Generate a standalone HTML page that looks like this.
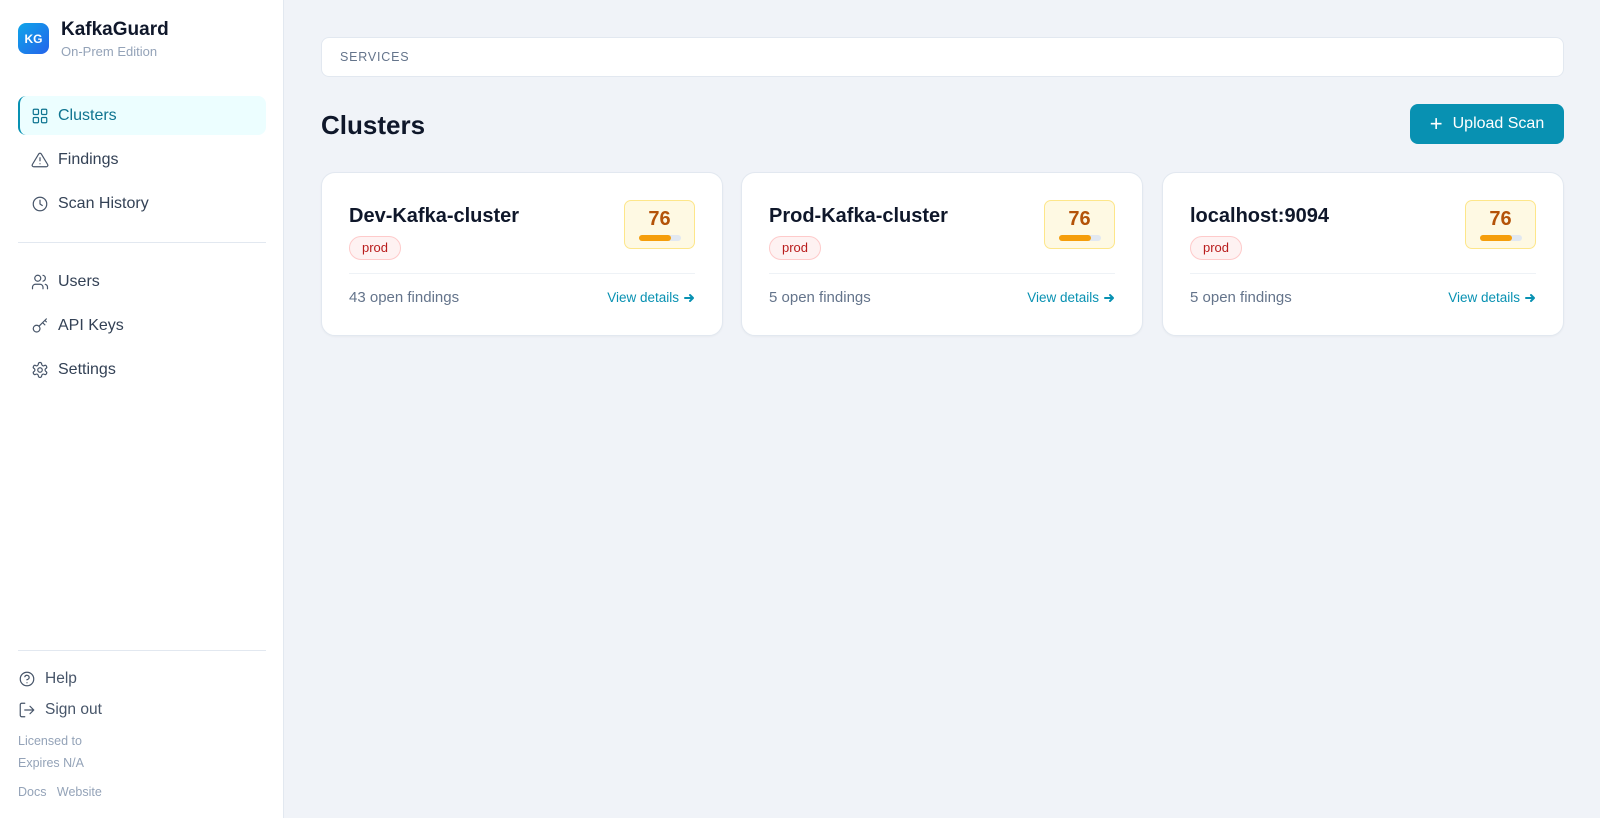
<!DOCTYPE html>
<html><head><meta charset="utf-8"><style>
*{box-sizing:border-box;margin:0;padding:0}
body{width:1600px;height:818px;font-family:"Liberation Sans",sans-serif;background:#f0f3f8;position:relative;overflow:hidden;color:#0f172a}
.sb{position:absolute;left:0;top:0;width:284px;height:818px;background:#fff;border-right:1px solid #e2e8f0}
.abs{position:absolute}
.logo{left:18px;top:23px;width:31px;height:31px;border-radius:8px;background:linear-gradient(135deg,#0ea5e9,#2563eb);color:#fff;font-weight:bold;font-size:12px;display:flex;align-items:center;justify-content:center}
.nav{position:absolute;left:18px;width:248px;height:39px;display:flex;align-items:center;padding-left:13px;font-size:16px;color:#334155}
.nav svg{width:18px;height:18px;margin-right:9px;fill:none;stroke:#475569;stroke-width:1.6;stroke-linecap:round;stroke-linejoin:round}
.nav.act{background:#ecfeff;color:#0e7490;border-left:2px solid #0891b2;border-radius:8px;padding-left:11px}
.nav.act svg{stroke:#0e7490}
.hr{position:absolute;left:18px;width:248px;height:1px;background:#e2e8f0}
.bt{position:absolute;left:18px;display:flex;align-items:center;font-size:15.5px;color:#475569}
.bt svg{width:18px;height:18px;margin-right:9px;fill:none;stroke:#475569;stroke-width:1.6;stroke-linecap:round;stroke-linejoin:round}
.sm{position:absolute;left:18px;font-size:12.5px;color:#94a3b8}
.card{position:absolute;top:172px;width:402px;height:164px;background:#fff;border:1px solid #e2e8f0;border-radius:14px;box-shadow:0 1px 2px rgba(0,0,0,.04)}
.ct{position:absolute;left:27px;top:32px;font-size:20px;font-weight:600;color:#0f172a}
.tag{position:absolute;left:27px;top:63px;height:24px;padding:0 12px;border-radius:12px;background:#fef2f2;border:1px solid #fecaca;color:#b91c1c;font-size:13px;line-height:22px}
.score{position:absolute;right:27px;top:27px;width:71px;height:49px;border-radius:7px;background:#fef9e3;border:1px solid #fde68a}
.score b{position:absolute;left:0;right:0;top:7px;text-align:center;font-size:20px;color:#b45309}
.bar{position:absolute;left:14px;top:34px;width:42px;height:6px;border-radius:3px;background:#e2e8f0}
.bar i{display:block;width:32px;height:6px;border-radius:3px;background:#f59e0b}
.dv{position:absolute;left:27px;right:27px;top:100px;height:1px;background:#eef2f6}
.of{position:absolute;left:27px;top:116px;font-size:15px;color:#64748b}
.vd{position:absolute;right:27px;top:117px;font-size:13.5px;color:#0891b2;display:flex;align-items:center}
.vd svg{width:12px;height:12px;margin-left:4px;fill:none;stroke:#0891b2;stroke-width:2;stroke-linecap:round;stroke-linejoin:round}
</style></head><body>
<div class="sb">
<div class="abs logo">KG</div>
<div class="abs" style="left:61px;top:19px;font-size:19px;font-weight:bold;color:#0f172a">KafkaGuard</div>
<div class="abs" style="left:61px;top:44px;font-size:13px;color:#94a3b8">On-Prem Edition</div>
<div class="nav act" style="top:96px"><svg viewBox="0 0 24 24"><rect x="3" y="3" width="7" height="7" rx="1.5"/><rect x="14" y="3" width="7" height="7" rx="1.5"/><rect x="14" y="14" width="7" height="7" rx="1.5"/><rect x="3" y="14" width="7" height="7" rx="1.5"/></svg>Clusters</div>
<div class="nav" style="top:140px"><svg viewBox="0 0 24 24"><path d="M10.3 3.9 1.8 18a2 2 0 0 0 1.7 3h17a2 2 0 0 0 1.7-3L13.7 3.9a2 2 0 0 0-3.4 0z"/><path d="M12 9v4M12 17h.01"/></svg>Findings</div>
<div class="nav" style="top:184px"><svg viewBox="0 0 24 24"><circle cx="12" cy="12" r="9"/><path d="M12 7v5l3 2"/></svg>Scan History</div>
<div class="hr" style="top:242px"></div>
<div class="nav" style="top:262px"><svg viewBox="0 0 24 24"><circle cx="9" cy="7" r="4"/><path d="M2 21v-2a4 4 0 0 1 4-4h6a4 4 0 0 1 4 4v2M16 3.1a4 4 0 0 1 0 7.8M22 21v-2a4 4 0 0 0-3-3.9"/></svg>Users</div>
<div class="nav" style="top:306px"><svg viewBox="0 0 24 24"><circle cx="7.5" cy="15.5" r="4.5"/><path d="m10.7 12.3 9.8-9.8M15.5 7.5l3 3M18.5 4.5l2 2"/></svg>API Keys</div>
<div class="nav" style="top:350px"><svg viewBox="0 0 24 24"><path d="M12.2 2h-.4a2 2 0 0 0-2 2v.2a2 2 0 0 1-1 1.7l-.4.3a2 2 0 0 1-2 0l-.2-.1a2 2 0 0 0-2.7.7l-.2.4a2 2 0 0 0 .7 2.7l.2.1a2 2 0 0 1 1 1.7v.5a2 2 0 0 1-1 1.7l-.2.1a2 2 0 0 0-.7 2.7l.2.4a2 2 0 0 0 2.7.7l.2-.1a2 2 0 0 1 2 0l.4.3a2 2 0 0 1 1 1.7v.2a2 2 0 0 0 2 2h.4a2 2 0 0 0 2-2v-.2a2 2 0 0 1 1-1.7l.4-.3a2 2 0 0 1 2 0l.2.1a2 2 0 0 0 2.7-.7l.2-.4a2 2 0 0 0-.7-2.7l-.2-.1a2 2 0 0 1-1-1.7v-.5a2 2 0 0 1 1-1.7l.2-.1a2 2 0 0 0 .7-2.7l-.2-.4a2 2 0 0 0-2.7-.7l-.2.1a2 2 0 0 1-2 0l-.4-.3a2 2 0 0 1-1-1.7V4a2 2 0 0 0-2-2z"/><circle cx="12" cy="12" r="3"/></svg>Settings</div>
<div class="hr" style="top:650px"></div>
<div class="bt" style="top:670px"><svg viewBox="0 0 24 24"><circle cx="12" cy="12" r="9"/><path d="M9.1 9a3 3 0 0 1 5.8 1c0 2-3 3-3 3M12 17h.01"/></svg>Help</div>
<div class="bt" style="top:701px"><svg viewBox="0 0 24 24"><path d="M9 21H5a2 2 0 0 1-2-2V5a2 2 0 0 1 2-2h4M16 17l5-5-5-5M21 12H9"/></svg>Sign out</div>
<div class="sm" style="top:734px">Licensed to</div>
<div class="sm" style="top:756px">Expires N/A</div>
<div class="sm" style="top:785px">Docs&nbsp;&nbsp;&nbsp;Website</div>
</div>

<div class="abs" style="left:321px;top:37px;width:1243px;height:40px;background:#fff;border:1px solid #e2e8f0;border-radius:8px;font-size:12.5px;letter-spacing:.8px;color:#64748b;padding:12px 0 0 18px">SERVICES</div>
<div class="abs" style="left:321px;top:110px;font-size:26px;font-weight:bold;color:#0f172a">Clusters</div>
<div class="abs" style="left:1410px;top:104px;width:154px;height:40px;border-radius:8px;background:#0891b2;color:#fff;font-size:16px;display:flex;align-items:center;justify-content:center"><span style="font-size:22px;font-weight:300;margin-right:10px;line-height:1">+</span>Upload Scan</div>

<div class="card" style="left:321px"><div class="ct">Dev-Kafka-cluster</div><div class="tag">prod</div><div class="score"><b>76</b><div class="bar"><i></i></div></div><div class="dv"></div><div class="of">43 open findings</div><div class="vd">View details<svg viewBox="0 0 12 12"><path d="M2 6h8M7 3l3 3-3 3"/></svg></div></div>
<div class="card" style="left:741px"><div class="ct">Prod-Kafka-cluster</div><div class="tag">prod</div><div class="score"><b>76</b><div class="bar"><i></i></div></div><div class="dv"></div><div class="of">5 open findings</div><div class="vd">View details<svg viewBox="0 0 12 12"><path d="M2 6h8M7 3l3 3-3 3"/></svg></div></div>
<div class="card" style="left:1162px"><div class="ct">localhost:9094</div><div class="tag">prod</div><div class="score"><b>76</b><div class="bar"><i></i></div></div><div class="dv"></div><div class="of">5 open findings</div><div class="vd">View details<svg viewBox="0 0 12 12"><path d="M2 6h8M7 3l3 3-3 3"/></svg></div></div>
</body></html>
